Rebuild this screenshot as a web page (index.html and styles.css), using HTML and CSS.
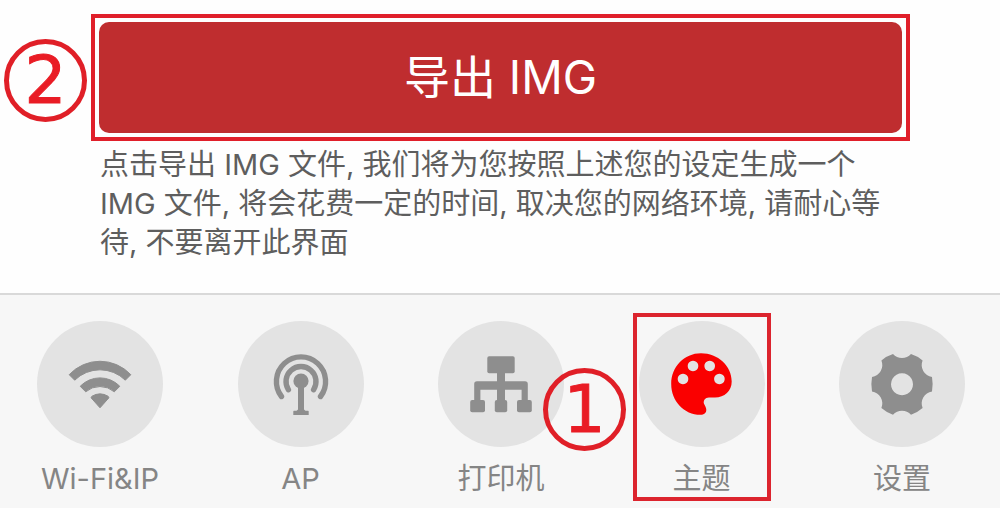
FILE: index.html
```html
<!DOCTYPE html>
<html lang="zh-CN">
<head>
<meta charset="utf-8">
<meta name="viewport" content="width=device-width, initial-scale=1">
<title>导出 IMG</title>
<link rel="stylesheet" href="styles.css">
</head>
<body>
<main class="content">
  <div class="export-frame">
    <button class="export-button" type="button" aria-describedby="export-help">导出 IMG</button>
    <span class="step step-two">2</span>
  </div>
  <p class="help" id="export-help">点击导出 IMG 文件, 我们将为您按照上述您的设定生成一个 IMG 文件, 将会花费一定的时间, 取决您的网络环境, 请耐心等待, 不要离开此界面</p>
</main>
<nav class="tabs">
  <a class="tab" href="#wifi">
    <svg class="icon" viewBox="0 0 126 126" aria-hidden="true">
      <g fill="currentColor" stroke="currentColor" stroke-width="1" stroke-linejoin="round">
        <path d="M32.2 53.7A42 42 0 0 1 93.8 53.7L88.3 59.2A36 36 0 0 0 37.7 59.2Z"/>
        <path d="M43.2 65.3A27.5 27.5 0 0 1 82.8 65.3L77.3 70.8A22 22 0 0 0 48.7 70.8Z"/>
        <path d="M54.2 76.9Q54 76 55 75.2Q63 70.5 71 75.2Q72 76 71.8 76.9L63 86.8Z"/>
      </g>
    </svg>
    <span class="label">Wi-Fi&amp;IP</span>
  </a>
  <a class="tab" href="#ap">
    <svg class="icon" viewBox="0 0 126 126" aria-hidden="true">
      <g fill="none" stroke="currentColor" stroke-width="5.4" stroke-linecap="round">
        <path d="M43.5 75.5A24.6 24.6 0 1 1 82.5 75.5"/>
        <path d="M50.4 68.7A15 15 0 1 1 75.6 68.7"/>
      </g>
      <circle cx="63" cy="60" r="7.6" fill="currentColor"/>
      <path fill="currentColor" d="M60 64H66V88.5L67.5 89.7H70Q70.7 89.7 70.7 90.5V94H55.3V90.5Q55.3 89.7 56 89.7H58.5L60 88.5Z"/>
    </svg>
    <span class="label">AP</span>
  </a>
  <a class="tab" href="#printer">
    <svg class="icon" viewBox="0 0 126 126" aria-hidden="true">
      <g fill="currentColor">
        <rect x="49.3" y="35.3" width="27.4" height="17" rx="1.8"/>
        <path d="M59 51H67V60.2H87Q89.8 60.2 89.8 63V80H83.6V68.7H67V80H59V68.7H42.4V80H36.2V63Q36.2 60.2 39 60.2H59Z"/>
        <rect x="32.2" y="79" width="14.8" height="12.3" rx="2"/>
        <rect x="56.8" y="79" width="12.4" height="12.3" rx="2"/>
        <rect x="79" y="79" width="14.8" height="12.3" rx="2"/>
      </g>
    </svg>
    <span class="label">打印机</span>
    <span class="step step-one">1</span>
  </a>
  <a class="tab tab-active" href="#theme" aria-current="page">
    <svg class="icon" viewBox="0 0 126 126" aria-hidden="true">
      <path fill="currentColor" fill-rule="evenodd" d="M62 32.3C79 32.3 92.7 45 92.7 60.5C92.7 70 85.5 76.5 76 76.5H70C66 76.5 64 80 65 82.8C66 85 67.3 86.5 67.3 88.8C67.3 92 65 93.8 61.5 93.8C45 93.8 32.2 80 32.2 63C32.2 46 45 32.3 62 32.3ZM44 52.7a5.3 5.3 0 1 0 .01 0ZM54 39.7a5.3 5.3 0 1 0 .01 0ZM70.7 39.7a5.3 5.3 0 1 0 .01 0ZM80.4 52.7a5.3 5.3 0 1 0 .01 0Z"/>
    </svg>
    <span class="label">主题</span>
  </a>
  <a class="tab" href="#settings">
    <svg class="icon" viewBox="0 0 126 126" aria-hidden="true">
      <path fill="currentColor" fill-rule="evenodd" d="M54 33A12 12 0 0 0 72 33Q78.5 35 83.6 39.5A12 12 0 0 0 93 56Q94.3 63 93 70.5A12 12 0 0 0 83.6 87Q78.5 91.5 72 93.7A12 12 0 0 0 54 93.7Q47.5 91.5 42.4 87A12 12 0 0 0 33 70.5Q31.7 63 33 56A12 12 0 0 0 42.4 39.5Q47.5 35 54 33ZM63 52.2a11 11 0 1 0 .01 0Z"/>
    </svg>
    <span class="label">设置</span>
  </a>
</nav>
</body>
</html>
```
FILE: styles.css
```css
*,
*::after {
  box-sizing: border-box;
}

body {
  display: flex;
  flex-direction: column;
  min-height: 100vh;
  margin: 0;
  background: #fefefe;
  font-family: Inter, "Noto Sans CJK SC", sans-serif;
  font-size: 29px;
}

.content {
  flex: 1;
  padding: 14px 90px 30px 91px;
}

.export-frame {
  position: relative;
  padding: 4px;
  border: 4px solid #e01f2a;
}

.export-button {
  display: block;
  width: 100%;
  height: 111px;
  padding: 0 0 8px;
  border: 0;
  border-radius: 10px;
  background: #bf2d2f;
  color: #fff;
  font-family: inherit;
  font-size: 46px;
}

.help {
  margin: 4px 0 0;
  padding: 0 20px 0 9px;
  color: #5e5e5e;
  line-height: 39px;
}

.tabs {
  display: flex;
  justify-content: space-between;
  padding: 0 35px 0 37px;
  border-top: 2px solid #d9d9d9;
  background: #f7f7f7;
}

.tab {
  position: relative;
  display: flex;
  flex-direction: column;
  align-items: center;
  gap: 12px;
  width: 126px;
  padding: 26px 0 9px;
  color: #8e8e8e;
  text-decoration: none;
}

.icon {
  width: 126px;
  height: 126px;
  border-radius: 50%;
  background: #e3e3e3;
}

.label {
  color: #858585;
  line-height: 40px;
}

.tab-active {
  color: #fa0000;
}

.tab-active::after {
  content: "";
  position: absolute;
  top: 18px;
  left: calc(50% - 69px);
  width: 138px;
  height: 188px;
  border: 4px solid #dc242e;
}

.step {
  position: absolute;
  z-index: 1;
  display: flex;
  align-items: center;
  justify-content: center;
  width: 83px;
  height: 83px;
  border: 5px solid #e01f27;
  border-radius: 50%;
  color: #e91c25;
  font-family: "DejaVu Sans", sans-serif;
  font-size: 66px;
  line-height: 1;
  -webkit-text-stroke: 1px #e91c25;
}

.step-two {
  top: 21px;
  left: -91px;
}

.step-one {
  top: 73px;
  left: calc(50% + 42px);
}
```
